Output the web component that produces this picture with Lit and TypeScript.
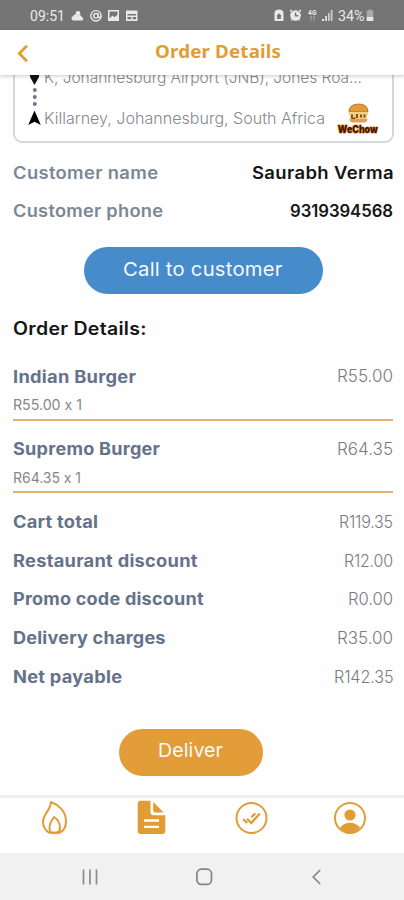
import { LitElement, html, css, svg } from "lit";
import { customElement, property } from "lit/decorators.js";

/** One line of text stretched so that it fills the given width. */
@customElement("fit-text")
class FitText extends LitElement {
  @property() text = "";
  @property({ type: Number }) width = 0;
  static styles = css`
    :host { display: inline-block; white-space: pre; flex: none; text-align: left; }
    span { display: inline-block; transform-origin: 0 50%; }
  `;
  render() {
    return html`<span>${this.text}</span>`;
  }
  firstUpdated() {
    const span = this.renderRoot.querySelector("span") as HTMLElement;
    const natural = span.offsetWidth;
    const gap = ((this.width - natural) * 0.25) / Math.max(1, this.text.length - 1);
    span.style.letterSpacing = `${gap}px`;
    const tracked = span.getBoundingClientRect().width - gap;
    span.style.transform = `scaleX(${this.width / tracked})`;
    this.style.width = `${this.width}px`;
  }
}

const fit = (text: string, width: number) =>
  html`<fit-text .text=${text} .width=${width}></fit-text>`;

const items = [
  { name: "Indian Burger", nw: 123, price: "R55.00", pw: 56, sub: "R55.00 x 1", sw: 69 },
  { name: "Supremo Burger", nw: 147, price: "R64.35", pw: 56, sub: "R64.35 x 1", sw: 68 },
];

const totals = [
  { name: "Cart total", nw: 85, price: "R119.35", pw: 54 },
  { name: "Restaurant discount", nw: 184.5, price: "R12.00", pw: 49 },
  { name: "Promo code discount", nw: 190.5, price: "R0.00", pw: 45 },
  { name: "Delivery charges", nw: 152.5, price: "R35.00", pw: 56 },
  { name: "Net payable", nw: 109, price: "R142.35", pw: 59.5 },
];

@customElement("app-root")
class AppRoot extends LitElement {
  static styles = css`
    :host {
      display: flex; flex-direction: column; width: 404px; height: 900px;
      box-sizing: border-box; overflow: hidden; background: #fefefe;
      font-family: Inter, "Noto Sans", sans-serif; color: #74777d;
    }
    * { box-sizing: border-box; }
    svg { display: block; flex: none; }
    .status { height: 30px; flex: none; background: #757575; color: #e9e9e9; display: flex;
      align-items: center; justify-content: space-between; padding: 2px 27px 0 30px;
      font: 15px/20px Roboto, sans-serif; }
    .header { height: 45px; flex: none; background: #fff; display: grid; grid-template-columns: 31px 1fr 31px;
      align-items: center; box-shadow: 0 1px 4px rgba(0,0,0,.22); z-index: 1; }
    .title { justify-self: center; margin: -4px 0 0 31px; color: #e19c35;
      font: 700 18px/24px "Noto Sans", "Open Sans", sans-serif; }
    .content { flex: 1; overflow: hidden; padding: 0 11px 0 12.5px; }
    .card { margin: -13px -1px 0 0; height: 81px; border: 2px solid #d5d8da; border-radius: 9px; background: #fff;
      display: flex; padding: 2px 13px 0 13px; justify-content: space-between; }
    .route { display: flex; flex-direction: column; width: 300px; font-size: 16px; color: #85888d; font-weight: 300; }
    .stop { display: flex; align-items: center; height: 22px; gap: 3px; }
    .dots { height: 19px; }
    .logo { margin-top: 37px; }
    .row { display: flex; justify-content: space-between; align-items: center; height: 38px; font-size: 17px; }
    .customer { padding-top: 11px; }
    .customer .row { font-weight: 600; color: #7c8796; }
    .customer .value { color: #151515; }
    .pill { display: flex; align-items: center; justify-content: center; border: 0; padding: 0 0 2px;
      height: 47px; border-radius: 24px; color: #f7f8fa; font: 400 19px/24px Inter, sans-serif; }
    .call { width: 239px; margin: 17px 0 0 71px; background: #468bca; padding-right: 1px; }
    .deliver { width: 144px; margin: 33px 0 0 106px; background: #e29d38; }
    h2 { margin: 24px 0 0; height: 22px; font: 600 18px/22px Inter, sans-serif; color: #151515; }
    .item { height: 72.5px; border-bottom: 2px solid #e4b270; padding-top: 18px; }
    .item.first { margin-top: 8px; }
    .item .row { height: 22px; }
    .item .name { margin-top: -1px; }
    .item .price { margin-top: -2px; }
    .sub { height: 18px; margin-top: 8px; font-size: 14px; line-height: 18px; color: #85878b; }
    .name { font-weight: 700; color: #65728a; }
    .price { font-weight: 300; font-size: 17px; color: #777b82; }
    .totals { padding-top: 10px; }
    .totals .row { height: 38.6px; }
    .tabs { height: 58px; flex: none; border-top: 3px solid #eeeeee; background: #fff; display: flex;
      justify-content: space-between; padding: 2px 37px 0 38px; }
    .nav { height: 47px; flex: none; background: #f1f1f1; display: flex; align-items: center;
      justify-content: space-between; padding: 0 81px 0 81px; }
  `;

  render() {
    return html`
      <div class="status">
        <div>${this.statusLeft()}</div>
        <div>${this.statusRight()}</div>
      </div>
      <div class="header">
        <svg width="31" height="45" viewBox="0 0 31 45"><path d="M27 15.700 19.300 23.500 27 31.300" fill="none" stroke="#e19c35" stroke-width="2.800"/></svg>
        <div class="title">${fit("Order Details", 126)}</div>
      </div>
      <div class="content">
        <div class="card">
          <div class="route">
            <div class="stop">
              <svg width="13" height="18" viewBox="0 0 13 18"><path d="M6.500 17 2 9V2h9v7Z" fill="#111"/></svg>
              ${fit("K, Johannesburg Airport (JNB), Jones Roa...", 318)}
            </div>
            <svg class="dots" width="13" height="19" viewBox="0 0 13 19">
              ${[2, 9, 16].map((y) => svg`<circle cx="6.800" cy=${y} r="2" fill="#6e7792"/>`)}
            </svg>
            <div class="stop">
              <svg width="13" height="18" viewBox="0 0 13 18"><path d="M6.500 1.500 12.800 16 6.500 12.800.2 16Z" fill="#000"/></svg>
              ${fit("Killarney, Johannesburg, South Africa", 281)}
            </div>
          </div>
          ${this.logo()}
        </div>
        <div class="customer">
          <div class="row">${fit("Customer name", 145)}<span class="value">${fit("Saurabh Verma", 141.5)}</span></div>
          <div class="row">${fit("Customer phone", 150)}<span class="value">${fit("9319394568", 103)}</span></div>
        </div>
        <button class="pill call">${fit("Call to customer", 159.5)}</button>
        <h2>${fit("Order Details:", 133.5)}</h2>
        ${items.map((i, n) => html`
          <div class="item ${n ? "" : "first"}">
            <div class="row"><span class="name">${fit(i.name, i.nw)}</span><span class="price">${fit(i.price, i.pw)}</span></div>
            <div class="sub">${fit(i.sub, i.sw)}</div>
          </div>`)}
        <div class="totals">
          ${totals.map((t) => html`
            <div class="row"><span class="name">${fit(t.name, t.nw)}</span><span class="price">${fit(t.price, t.pw)}</span></div>`)}
        </div>
        <button class="pill deliver">${fit("Deliver", 65)}</button>
      </div>
      <div class="tabs">${this.tabIcons()}</div>
      <div class="nav">
        <svg width="18" height="18" viewBox="0 0 18 18"><path d="M2.500 1.500v15M9 1.500v15M15.500 1.500v15" stroke="#8b8b8b" stroke-width="1.700"/></svg>
        <svg width="18" height="18" viewBox="0 0 18 18"><rect x="0.900" y="1.200" width="14.600" height="15.200" rx="4.500" fill="none" stroke="#858585" stroke-width="1.700"/></svg>
        <svg width="12" height="18" viewBox="0 0 12 18"><path d="M9.200 2 2.200 9l7 7" fill="none" stroke="#858585" stroke-width="1.700"/></svg>
      </div>`;
  }

  logo() {
    return html`<svg class="logo" width="42" height="32" viewBox="0 0 42 32">
      <path d="M12 9Q12 1 21.500 1T31 9Z" fill="#e49a38" stroke="#a86a24" stroke-width=".8"/>
      <rect x="11.500" y="9" width="20" height="3" rx="1.500" fill="#f3d27d"/>
      <rect x="13" y="11" width="17" height="6" fill="#f0c983"/>
      <path d="M15 11.500v3.500q2 2 3-.5M20 11v4M24 11.500v3M27.500 11.500v3" stroke="#7a3b17" stroke-width="1.700" fill="none"/>
      <path d="M12.500 16h18q0 3.500-4 3.500h-10q-4 0-4-3.500Z" fill="#e2a04a"/>
      <text x=".8" y="29.500" font-family="Inter, sans-serif" font-size="10" font-weight="900" fill="#4b1408" stroke="#e8952c" stroke-width="1.200" paint-order="stroke" textLength="40" lengthAdjust="spacingAndGlyphs">WeChow</text>
    </svg>`;
  }

  statusLeft() {
    return html`<svg width="110" height="20" viewBox="0 0 110 20">
      <text x="0" y="14.600" font-size="14.500" fill="#e9e9e9" textLength="35" lengthAdjust="spacingAndGlyphs">09:51</text>
      <g fill="#e9e9e9">
        <circle cx="48" cy="7.300" r="2.300"/><path d="M43 14.500a2.200 2.200 0 0 1 0-4.200 3.300 3.300 0 0 1 5-1 3.200 3.200 0 0 1 4 2 1.700 1.700 0 0 1 0 3.200Z"/>
        <g fill="none" stroke="#e9e9e9" stroke-width="1.400"><circle cx="66" cy="9.800" r="5.200"/><circle cx="66" cy="9.800" r="2.300"/><path d="M68.300 7.500v3.200q1.700 1.700 2.700-.8"/></g>
        <path fill-rule="evenodd" d="M78 4h11v11H78ZM79.500 5.500v7l3-3 2 1.700 3-2.500V5.500Z"/>
        <path fill-rule="evenodd" d="M96 4.500h11.500V15H96ZM97.500 8v1.500H106V8Zm0 3v2.300h3.800V11Zm5.200 0v2.300h3.300V11Z"/>
      </g></svg>`;
  }

  statusRight() {
    return html`<svg width="103" height="20" viewBox="0 0 103 20">
      <g fill="#e9e9e9">
        <path fill-rule="evenodd" d="M.5 15V7Q.5 3.500 5 3.500T9.500 7v8ZM2.200 10.200h1V13h3.600v-2.800h1L5 7.200Z"/>
        <circle cx="21.500" cy="9.500" r="5.300"/><path d="M16 3.800 18.500 4l-2.300 2.400Zm11 0L24.500 4l2.300 2.400ZM16.700 14.800l1.500-2.500 1.500 1.500Zm9.800 0-1.500-2.500-1.500 1.500Z"/>
        <path d="M21.500 6.500v3.300h2.800" stroke="#757575" stroke-width="1.400" fill="none"/>
        <text x="34" y="8.500" font-size="6.500" font-weight="700" textLength="8.500">4G</text>
        <path d="M37 10v4.500M40 10v4.500" stroke="#a4a4a4" stroke-width="1.300"/>
        <path d="M48 13h2v2h-2Zm3.200-3h1.700v5h-1.700Z"/><path d="M54 7h1.700v8H54Zm2.700-3h1.800v11h-1.800Z" opacity=".75"/>
        <text x="64" y="14.600" font-size="14.500" textLength="26.500" lengthAdjust="spacingAndGlyphs">34%</text>
        <path d="M94.500 3.500h3v1.300h1.800V11h-6.600V4.800h1.800Z" fill="#aaa"/><path d="M92.700 11h6.600v4h-6.600Z"/>
      </g></svg>`;
  }

  tabIcons() {
    return html`
      <svg width="34" height="40" viewBox="0 0 34 40"><g fill="none" stroke="#e19c35" stroke-width="2" stroke-linejoin="round">
        <path d="M12.800 2C13.500 9 5 14 5 22c0 5 3 9.500 6.500 10.700h10c4-1.500 6.500-6 6.500-11.700C28 11 20 4.500 12.800 2Z"/>
        <path d="M16 17c-2.500 3.500-4.500 6.500-4.500 11 0 3 1 4.700 3 4.700h4.500c2.500-1 3-2.700 3-4.700 0-4-2-8.500-6-11Z"/></g></svg>
      <svg width="34" height="40" viewBox="0 0 34 40">
        <path fill="#e19c35" d="M4.700.8H14.500V12q0 3.200 3.200 3.200H29.300V31q0 3-3 3H4.700q-3 0-3-3V3.800q0-3 3-3Z"/>
        <path fill="#e19c35" d="M17.200 2v8.500q0 2 2 2h8.500Z"/>
        <path d="M8 20.500H23M8 26.800H23" stroke="#fff" stroke-width="2.300"/></svg>
      <svg width="34" height="40" viewBox="0 0 34 40"><g fill="none" stroke="#e19c35">
        <circle cx="16.500" cy="18" r="15" stroke-width="2"/>
        <path stroke-width="2.300" d="m12 18.800 4.300 4.200 8.500-9.500M8.200 19.200l4 3.800M16.300 17.200l4-4"/></g></svg>
      <svg width="34" height="40" viewBox="0 0 34 40"><circle cx="17" cy="18" r="15" fill="none" stroke="#e19c35" stroke-width="2"/>
        <circle cx="17" cy="15" r="5.600" fill="#e19c35"/>
        <path fill="#e19c35" d="M7 27.500q4-4.700 10-4.700t10 4.700Q23 33 17 33T7 27.500Z"/></svg>`;
  }
}
